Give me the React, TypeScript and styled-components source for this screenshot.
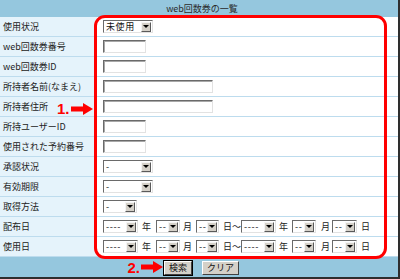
import React from "react";
import styled, { createGlobalStyle } from "styled-components";

const GlobalStyle = createGlobalStyle`
  html, body {
    margin: 0;
    padding: 0;
    background: #ffffff;
  }
  body {
    font-family: "Noto Sans CJK JP", "Noto Sans", sans-serif;
  }
`;

const Frame = styled.div`
  position: relative;
  width: 400px;
  height: 279px;
  box-sizing: border-box;
  border-right: 2px solid #2e2e2e;
  border-bottom: 2px solid #2e2e2e;
  display: flex;
  flex-direction: column;
  background: #ffffff;
  overflow: hidden;
`;

const Header = styled.div`
  height: 17px;
  box-sizing: border-box;
  background: #95c7de;
  color: #2a2a2a;
  font-size: 9px;
  display: flex;
  align-items: center;
  justify-content: center;
  padding-left: 6px;
  padding-bottom: 1px;
`;

const Row = styled.div`
  height: 20px;
  box-sizing: border-box;
  border-bottom: 1px solid #bddcee;
  display: grid;
  grid-template-columns: 97px 1fr;
`;

const Label = styled.div`
  background: #e5f3fb;
  color: #222;
  font-size: 9px;
  display: flex;
  align-items: center;
  padding-left: 3px;
  white-space: nowrap;
`;

const Cell = styled.div`
  display: flex;
  align-items: center;
  padding-left: 6px;
`;

const TextBox = styled.input<{ $w: number }>`
  width: ${(p) => p.$w}px;
  height: 13px;
  box-sizing: border-box;
  margin: 0;
  padding: 0;
  border: 1px solid;
  border-color: #6a6a6a #e2e2e2 #e2e2e2 #6a6a6a;
  box-shadow: inset 1px 1px 0 #a8a8a8;
  background: #ffffff;
`;

const SelectBox = styled.div<{ $w: number }>`
  width: ${(p) => p.$w}px;
  height: 13px;
  box-sizing: border-box;
  border: 1px solid;
  border-color: #6a6a6a #e2e2e2 #e2e2e2 #6a6a6a;
  background: #ffffff;
  display: flex;
  align-items: center;
  flex-shrink: 0;
`;

const SelectText = styled.span`
  flex: 1;
  font-size: 9px;
  color: #111;
  padding-left: 2px;
  line-height: 11px;
  letter-spacing: 0.6px;
  white-space: nowrap;
  overflow: hidden;
`;

const SelectArrow = styled.span`
  width: 10px;
  height: 10px;
  box-sizing: border-box;
  margin-right: 1px;
  background: #d4d0c8;
  border: 1px solid;
  border-color: #f4f4f4 #5a5a5a #5a5a5a #f4f4f4;
  display: flex;
  align-items: center;
  justify-content: center;

  &::after {
    content: "";
    border-left: 3px solid transparent;
    border-right: 3px solid transparent;
    border-top: 3px solid #000;
  }
`;

const Unit = styled.span<{ $ml: number; $mr: number }>`
  font-size: 9px;
  color: #222;
  margin-left: ${(p) => p.$ml}px;
  margin-right: ${(p) => p.$mr}px;
  white-space: nowrap;
`;

const Footer = styled.div`
  flex: 1;
  background: #95c7de;
  display: flex;
  align-items: center;
  justify-content: center;
  padding-left: 5px;
`;

const ButtonGroup = styled.div`
  position: relative;
  display: flex;
  gap: 10px;
  margin-top: 1px;
`;

const Button = styled.button<{ $primary?: boolean }>`
  height: 14px;
  margin: 0;
  padding: 0 4px;
  box-sizing: border-box;
  font-family: "Noto Sans CJK JP", sans-serif;
  font-size: 9px;
  line-height: 10px;
  color: #111;
  background: #d4d0c8;
  border: 1px solid;
  border-color: #ffffff #404040 #404040 #ffffff;
  outline: ${(p) => (p.$primary ? "1px solid #000" : "none")};
`;

const Highlight = styled.div`
  position: absolute;
  left: 94px;
  top: 15px;
  width: 293px;
  height: 244px;
  box-sizing: border-box;
  border: 3px solid #ff0000;
  border-radius: 11px;
  pointer-events: none;
`;

const Pointer = styled.div`
  position: absolute;
  display: flex;
  align-items: center;
  gap: 1px;
  color: #ff0000;
  font-family: "Liberation Sans", Arial, sans-serif;
  font-weight: bold;
  font-size: 15px;
  line-height: 15px;
`;

const StepOne = styled(Pointer)`
  left: 57px;
  top: 101px;
`;

const StepTwo = styled(Pointer)`
  right: calc(100% + 1px);
  top: -1px;
`;

function Arrow() {
  return (
    <svg width="22" height="12" viewBox="0 0 22 12">
      <rect x="0" y="3.5" width="13" height="5" fill="#ff0000" />
      <polygon points="12,0 22,6 12,12" fill="#ff0000" />
    </svg>
  );
}

function Select({ w, text }: { w: number; text: string }) {
  return (
    <SelectBox $w={w}>
      <SelectText>{text}</SelectText>
      <SelectArrow />
    </SelectBox>
  );
}

function DateRange() {
  return (
    <Cell>
      <Select w={35} text="----" />
      <Unit $ml={4} $mr={5}>年</Unit>
      <Select w={24} text="--" />
      <Unit $ml={3} $mr={4}>月</Unit>
      <Select w={23} text="--" />
      <Unit $ml={4} $mr={0}>日～</Unit>
      <Select w={35} text="----" />
      <Unit $ml={3} $mr={4}>年</Unit>
      <Select w={24} text="--" />
      <Unit $ml={5} $mr={2}>月</Unit>
      <Select w={25} text="--" />
      <Unit $ml={4} $mr={0}>日</Unit>
    </Cell>
  );
}

export default function App() {
  return (
    <>
      <GlobalStyle />
      <Frame>
        <Header>web回数券の一覧</Header>

        <Row>
          <Label>使用状況</Label>
          <Cell>
            <Select w={50} text="未使用" />
          </Cell>
        </Row>
        <Row>
          <Label>web回数券番号</Label>
          <Cell>
            <TextBox $w={43} />
          </Cell>
        </Row>
        <Row>
          <Label>web回数券ID</Label>
          <Cell>
            <TextBox $w={43} />
          </Cell>
        </Row>
        <Row>
          <Label>所持者名前(なまえ)</Label>
          <Cell>
            <TextBox $w={110} />
          </Cell>
        </Row>
        <Row>
          <Label>所持者住所</Label>
          <Cell>
            <TextBox $w={110} />
          </Cell>
        </Row>
        <Row>
          <Label>所持ユーザーID</Label>
          <Cell>
            <TextBox $w={43} />
          </Cell>
        </Row>
        <Row>
          <Label>使用された予約番号</Label>
          <Cell>
            <TextBox $w={43} />
          </Cell>
        </Row>
        <Row>
          <Label>承認状況</Label>
          <Cell>
            <Select w={50} text="-" />
          </Cell>
        </Row>
        <Row>
          <Label>有効期限</Label>
          <Cell>
            <Select w={50} text="-" />
          </Cell>
        </Row>
        <Row>
          <Label>取得方法</Label>
          <Cell>
            <Select w={34} text="-" />
          </Cell>
        </Row>
        <Row>
          <Label>配布日</Label>
          <DateRange />
        </Row>
        <Row>
          <Label>使用日</Label>
          <DateRange />
        </Row>

        <Footer>
          <ButtonGroup>
            <StepTwo>
              2.
              <Arrow />
            </StepTwo>
            <Button $primary>検索</Button>
            <Button>クリア</Button>
          </ButtonGroup>
        </Footer>

        <Highlight />
        <StepOne>
          1.
          <Arrow />
        </StepOne>
      </Frame>
    </>
  );
}
